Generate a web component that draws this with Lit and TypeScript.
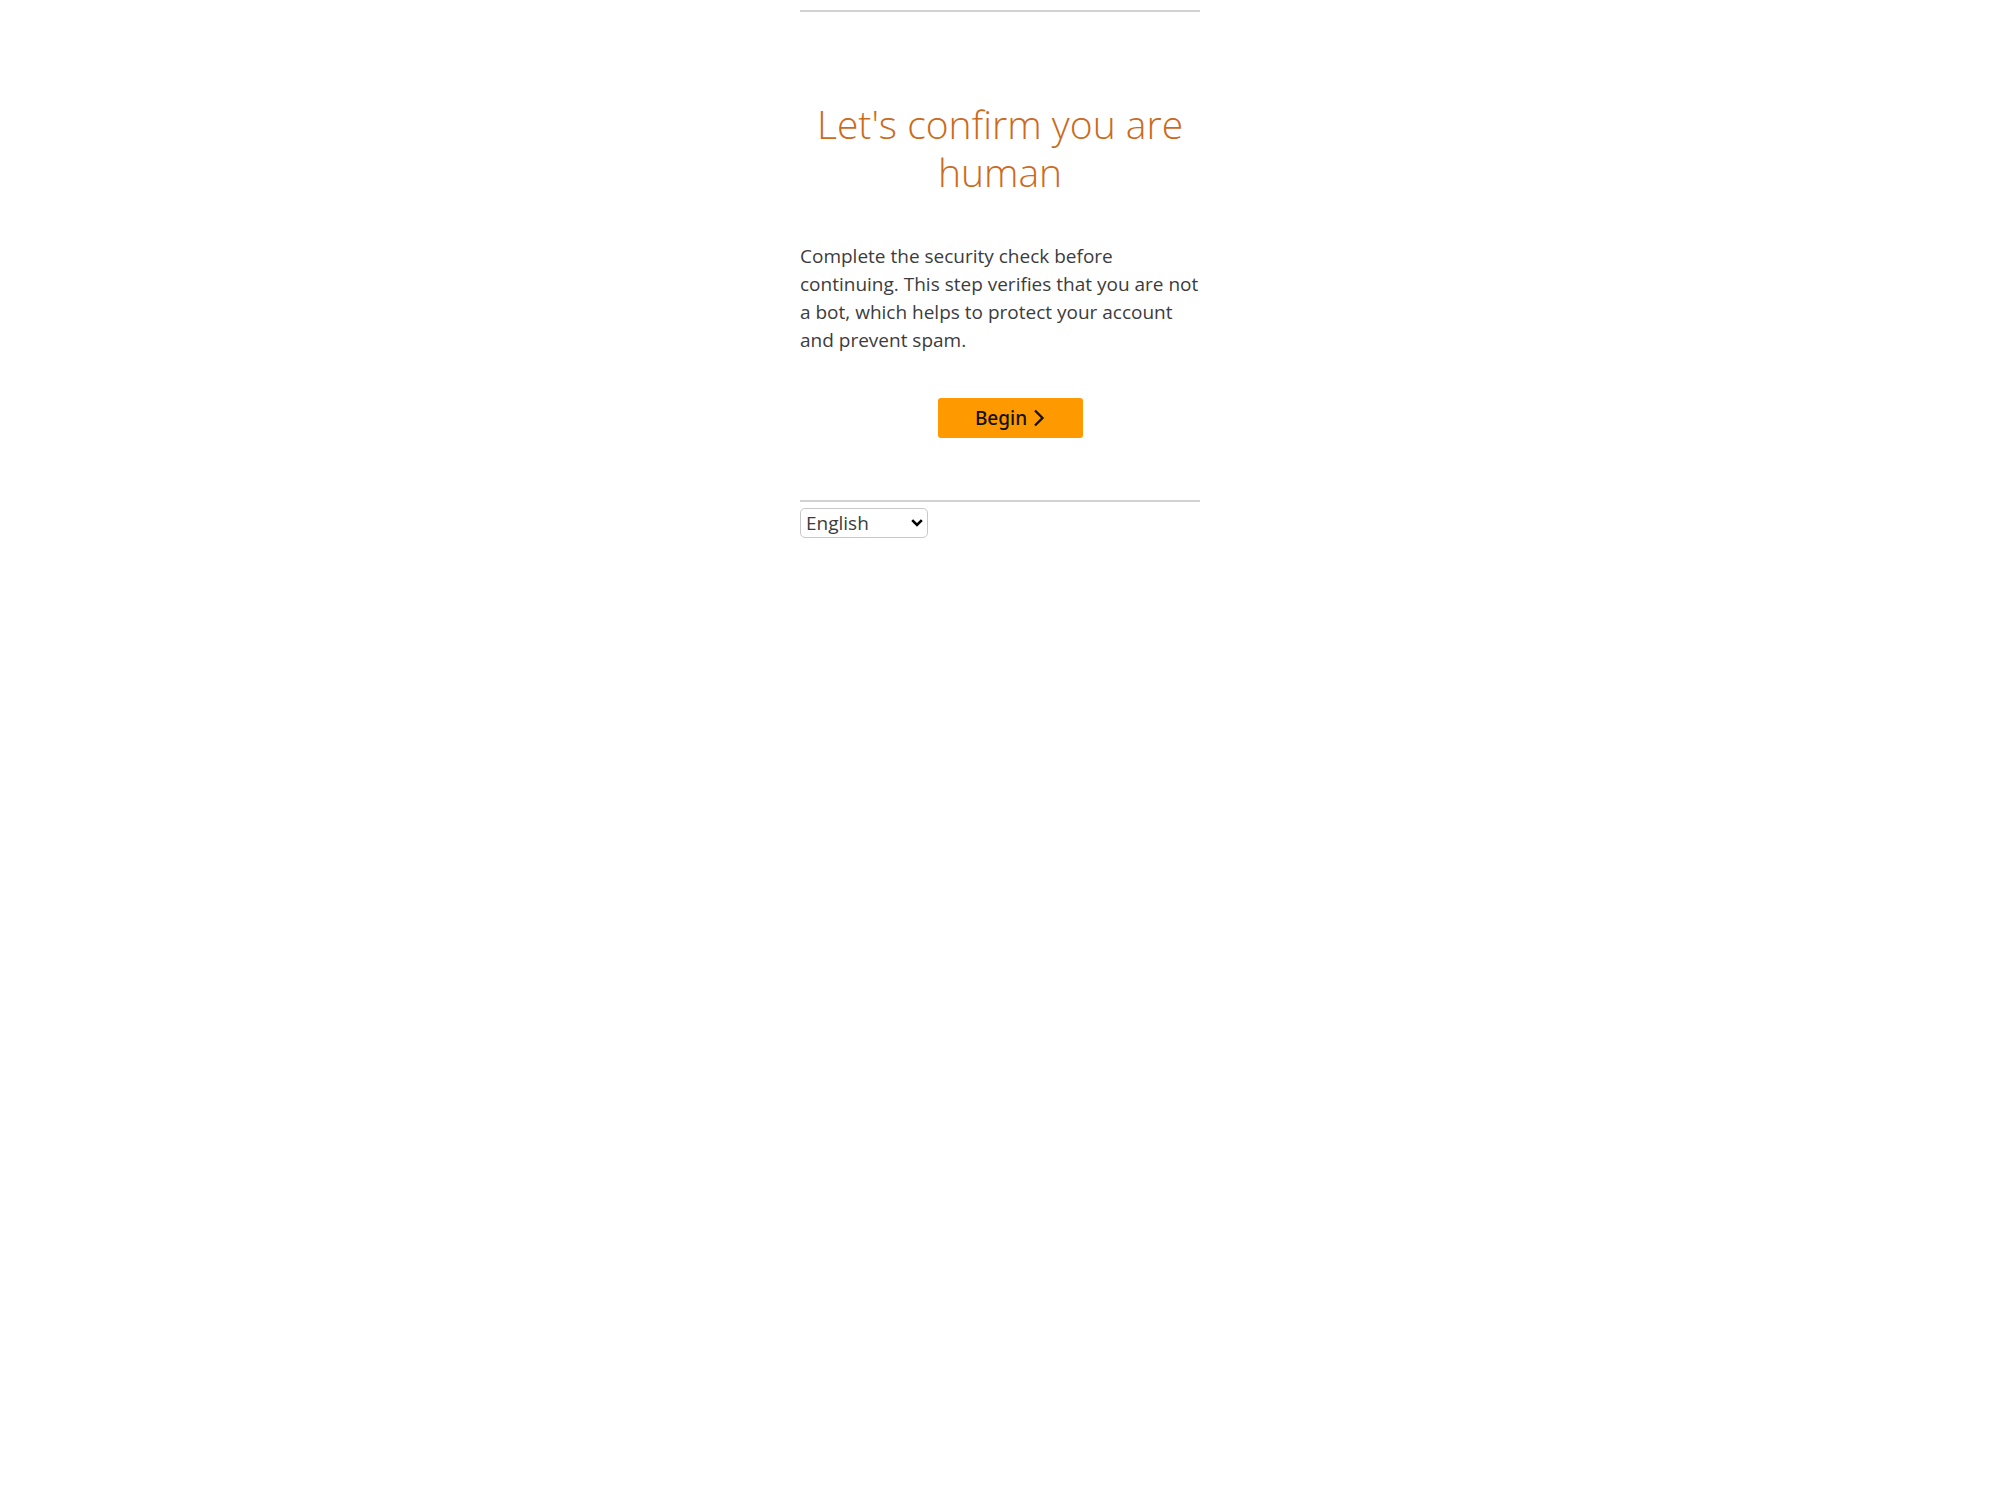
import { LitElement, html, css } from "lit";
import { customElement, state } from "lit/decorators.js";

@customElement("app-root")
export class AppRoot extends LitElement {
  static styles = css`
    :host {
      display: block;
      background: #fff;
      min-height: 100vh;
      color: #3c3c3c;
      font: 400 19px/28px "Open Sans", "Noto Sans", sans-serif;
    }
    .page {
      box-sizing: border-box;
      max-width: 400px;
      margin: 0 auto;
      padding-top: 10px;
    }
    .panel {
      border: solid #d2d2d2;
      border-width: 2px 0;
      padding: 88px 0 62px;
    }
    .title {
      margin: 0 0 46px;
      color: #cc6a1c;
      font-size: 39px;
      font-weight: 300;
      line-height: 48px;
      text-align: center;
    }
    .text {
      margin: 0 0 44px;
    }
    .actions {
      display: flex;
      justify-content: center;
      padding-left: 20px;
    }
    .begin {
      display: flex;
      align-items: center;
      justify-content: center;
      gap: 6px;
      min-width: 145px;
      height: 40px;
      padding: 0 20px;
      border: 0;
      border-radius: 3px;
      background: #ff9900;
      color: #111;
      font: 500 19px/28px "Noto Sans", sans-serif;
      cursor: pointer;
    }
    .chevron {
      width: 12px;
      height: 18px;
    }
    .picker {
      position: relative;
      width: 128px;
      margin-top: 6px;
    }
    .language {
      appearance: none;
      display: block;
      box-sizing: border-box;
      width: 100%;
      height: 30px;
      padding: 0 24px 0 5px;
      border: 1px solid #c8c8c8;
      border-radius: 5px;
      background: #fff;
      color: inherit;
      font: inherit;
    }
    .arrow {
      position: absolute;
      top: 11px;
      right: 5px;
      width: 12px;
      height: 8px;
      color: #000;
      pointer-events: none;
    }
  `;

  @state() private language = "English";

  private onLanguage(event: Event) {
    this.language = (event.target as HTMLSelectElement).value;
  }

  render() {
    return html`
      <main class="page">
        <section class="panel">
          <h1 class="title">Let's confirm you are human</h1>
          <p class="text">
            Complete the security check before continuing. This step verifies
            that you are not a bot, which helps to protect your account and
            prevent spam.
          </p>
          <div class="actions">
            <button class="begin" type="button">
              Begin
              <svg class="chevron" viewBox="0 0 12 18" aria-hidden="true">
                <path d="M2 1.5 9.5 9 2 16.5" fill="none" stroke="currentColor" stroke-width="2.3" />
              </svg>
            </button>
          </div>
        </section>
        <div class="picker">
          <select class="language" aria-label="Language" .value=${this.language} @change=${this.onLanguage}>
            <option>English</option>
          </select>
          <svg class="arrow" viewBox="0 0 12 8" aria-hidden="true">
            <path d="M1.2 1.2 6 6 10.8 1.2" fill="none" stroke="currentColor" stroke-width="2.6" />
          </svg>
        </div>
      </main>
    `;
  }
}
